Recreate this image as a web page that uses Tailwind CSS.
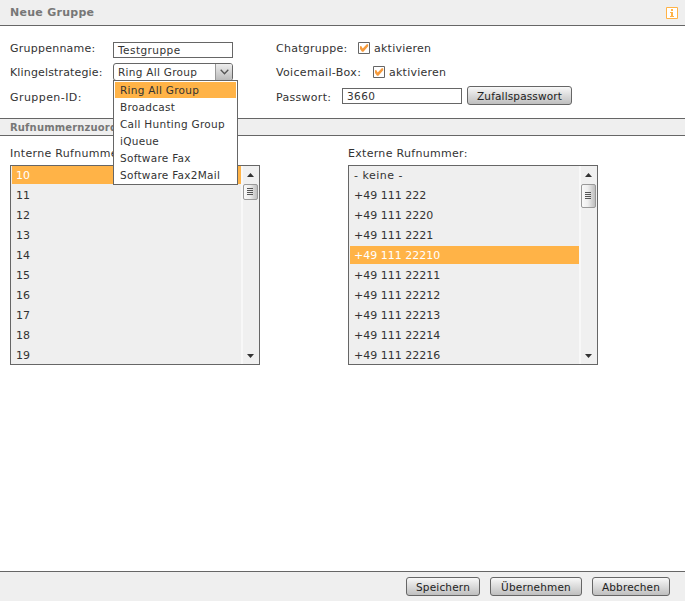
<!DOCTYPE html>
<html lang="de">
<head>
<meta charset="utf-8">
<title>Neue Gruppe</title>
<script src="https://cdn.jsdelivr.net/npm/@tailwindcss/browser@4"></script>
</head>
<body class="w-[685px] h-[601px] overflow-hidden bg-white text-[#333] font-['DejaVu_Sans',sans-serif] text-[11px] leading-[14px] flex flex-col whitespace-nowrap">
<header class="h-[26px] shrink-0 bg-[#efefef] border-b border-[#666] flex items-center justify-between pl-[10px] pr-[7px]">
  <h1 class="font-bold text-[#777] tracking-[0.27px] mt-px">Neue Gruppe</h1>
  <svg class="mt-px" width="12" height="12" viewBox="0 0 12 12"><path d="M.5.5h11v11H.5z" fill="#fff" stroke="#ffb347"/><path d="M5 2h2v2H5zM4 5h3v4h1v1H4V9h1V6H4z" fill="#ffb347"/></svg>
</header>
<section class="h-[92px] shrink-0 flex pt-[12px] pl-[10px]">
  <div class="w-[266px] flex flex-col">
    <div class="h-[24px] flex items-center"><label class="w-[103px] tracking-[0.24px] -mt-[3px]">Gruppenname:</label><div class="w-[120px] h-[16px] border border-[#666] bg-white pl-[4px] text-[10.5px] leading-[15px] tracking-[0.45px]">Testgruppe</div></div>
    <div class="h-[24px] flex items-center relative"><label class="w-[103px] tracking-[0.15px] -mt-[2px]">Klingelstrategie:</label>
      <div class="w-[120px] h-[18px] -mt-[4px] border border-[#666] rounded-[3px] bg-white flex overflow-hidden"><span class="flex-1 pl-[4px] text-[10.5px] leading-[17px] tracking-[0.28px]">Ring All Group</span><span class="w-[17px] border-l border-[#999] bg-linear-to-b from-[#eee] to-[#bbb] flex items-center justify-center"><svg width="9" height="6" viewBox="0 0 9 6"><path d="M.7.7 4.5 4.7 8.3.7" fill="none" stroke="#555" stroke-width="1.3"/></svg></span></div>
      <ul class="absolute z-10 left-[103px] top-[18px] w-[125px] h-[105px] border border-[#666] bg-white px-px pt-px text-[10.5px] leading-[17px] tracking-[0.28px]">
        <li class="h-[17px] pl-[5px] -mb-px leading-[17px] bg-[#ffb347] border-b border-white">Ring All Group</li>
        <li class="h-[17px] pl-[5px] mt-px">Broadcast</li>
        <li class="h-[17px] pl-[5px]">Call Hunting Group</li>
        <li class="h-[17px] pl-[5px]">iQueue</li>
        <li class="h-[17px] pl-[5px]">Software Fax</li>
        <li class="h-[17px] pl-[5px]">Software Fax2Mail</li>
      </ul>
    </div>
    <div class="h-[24px] flex items-center tracking-[0.43px]">Gruppen-ID:</div>
  </div>
  <div class="flex flex-col">
    <div class="h-[24px] flex items-center -mt-px"><span class="w-[82px] tracking-[0.25px]">Chatgruppe:</span><svg class="mr-[4px] -mt-[2px]" width="12" height="12" viewBox="0 0 12 12"><path d="M.5.5h11v11H.5z" fill="#fff" stroke="#666"/><path d="M2 4.2 3.2 4 4.7 6.4 9 2l1.2.5v1.8L5.4 9.7H4L2 7z" fill="#f59a3c"/></svg><span class="tracking-[0.25px]">aktivieren</span></div>
    <div class="h-[24px] flex items-center"><span class="w-[97px] tracking-[0.33px]">Voicemail-Box:</span><svg class="mr-[4px] -mt-[2px]" width="12" height="12" viewBox="0 0 12 12"><path d="M.5.5h11v11H.5z" fill="#fff" stroke="#666"/><path d="M2 4.2 3.2 4 4.7 6.4 9 2l1.2.5v1.8L5.4 9.7H4L2 7z" fill="#f59a3c"/></svg><span class="tracking-[0.25px]">aktivieren</span></div>
    <div class="h-[24px] flex items-center mt-px"><span class="w-[66px] tracking-[0.3px] -mt-px">Passwort:</span><div class="w-[120px] h-[16px] -mt-[4px] border border-[#666] bg-white pl-[4px] text-[10.5px] leading-[15px] tracking-[0.4px]">3660</div><button class="ml-[5px] -mt-[5px] w-[105px] h-[19px] border border-[#666] rounded-[3px] bg-linear-to-b from-[#f8f8f8] to-[#bfbfbf] text-[10.5px] leading-[16px] tracking-[0.15px] text-[#222]">Zufallspasswort</button></div>
  </div>
</section>
<h2 class="h-[18px] shrink-0 bg-[#efefef] border-y border-[#666] pl-[10px] font-bold text-[10px] leading-[17px] tracking-[0.15px] text-[#777]">Rufnummernzuordnung</h2>
<main class="flex-1 flex pl-[10px] pt-[11px] gap-[88px]">
  <section class="w-[250px]">
    <h3 class="h-[18px] tracking-[0.3px]">Interne Rufnummer:</h3>
    <div class="h-[200px] border border-[#666] bg-[#efefef] flex justify-between pl-px">
      <ul class="w-[229px] leading-[20px]">
        <li class="h-[18px] mb-[2px] pl-[4px] leading-[20px] bg-[#ffb347] text-white">10</li>
        <li class="pl-[4px]">11</li><li class="pl-[4px]">12</li><li class="pl-[4px]">13</li><li class="pl-[4px]">14</li><li class="pl-[4px]">15</li><li class="pl-[4px]">16</li><li class="pl-[4px]">17</li><li class="pl-[4px]">18</li><li class="h-[18px] pl-[4px]">19</li>
      </ul>
      <div class="w-[18px] border-l-2 border-[#f8f8f8] bg-[#f0f0f0] flex flex-col items-center pr-px">
        <svg class="mt-[7px]" width="7" height="4" viewBox="0 0 7 4"><path d="M3.5 0 7 4H0z" fill="#333"/></svg>
        <svg class="mt-[7px]" width="15" height="17" viewBox="0 0 15 17"><defs><linearGradient id="thumbA"><stop stop-color="#fafafa"/><stop offset=".45" stop-color="#eee"/><stop offset="1" stop-color="#bbb"/></linearGradient></defs><rect x=".5" y=".5" width="14" height="15" rx="1.5" fill="url(#thumbA)" stroke="#999"/><path d="M4 4.5h6M4 6.5h6M4 8.5h6M4 10.5h6" stroke="#555"/></svg>
        <svg class="mt-auto mb-[6px]" width="7" height="4" viewBox="0 0 7 4"><path d="M0 0h7L3.5 4z" fill="#333"/></svg>
      </div>
    </div>
  </section>
  <section class="w-[250px]">
    <h3 class="h-[18px] tracking-[0.3px]">Externe Rufnummer:</h3>
    <div class="h-[200px] border border-[#666] bg-[#efefef] flex justify-between pl-px">
      <ul class="w-[229px] leading-[20px]">
        <li class="h-[20px] pl-[4px] tracking-[0.5px]">- keine -</li><li class="pl-[4px]">+49 111 222</li><li class="pl-[4px]">+49 111 2220</li><li class="pl-[4px]">+49 111 2221</li>
        <li class="h-[18px] mb-[2px] pl-[4px] leading-[20px] bg-[#ffb347] text-white">+49 111 22210</li>
        <li class="pl-[4px]">+49 111 22211</li><li class="pl-[4px]">+49 111 22212</li><li class="pl-[4px]">+49 111 22213</li><li class="pl-[4px]">+49 111 22214</li><li class="h-[18px] pl-[4px]">+49 111 22216</li>
      </ul>
      <div class="w-[18px] border-l-2 border-[#f8f8f8] bg-[#f0f0f0] flex flex-col items-center pr-px">
        <svg class="mt-[7px]" width="7" height="4" viewBox="0 0 7 4"><path d="M3.5 0 7 4H0z" fill="#333"/></svg>
        <svg class="mt-[7px]" width="15" height="25" viewBox="0 0 15 25"><defs><linearGradient id="thumbB"><stop stop-color="#fafafa"/><stop offset=".45" stop-color="#eee"/><stop offset="1" stop-color="#bbb"/></linearGradient></defs><rect x=".5" y=".5" width="14" height="23" rx="1.5" fill="url(#thumbB)" stroke="#999"/><path d="M4 8.5h6M4 10.5h6M4 12.5h6M4 14.5h6" stroke="#555"/></svg>
        <svg class="mt-auto mb-[6px]" width="7" height="4" viewBox="0 0 7 4"><path d="M0 0h7L3.5 4z" fill="#333"/></svg>
      </div>
    </div>
  </section>
</main>
<footer class="h-[30px] shrink-0 bg-[#efefef] border-t border-[#666] flex items-center justify-end gap-[10px] pr-[15px] text-[10.5px] leading-[16px] tracking-[0.18px] text-[#222]">
  <button class="w-[74px] h-[19px] border border-[#666] rounded-[3px] bg-linear-to-b from-[#f8f8f8] to-[#bfbfbf]">Speichern</button>
  <button class="w-[92px] h-[19px] border border-[#666] rounded-[3px] bg-linear-to-b from-[#f8f8f8] to-[#bfbfbf]">Übernehmen</button>
  <button class="w-[78px] h-[19px] border border-[#666] rounded-[3px] bg-linear-to-b from-[#f8f8f8] to-[#bfbfbf]">Abbrechen</button>
</footer>
</body>
</html>
